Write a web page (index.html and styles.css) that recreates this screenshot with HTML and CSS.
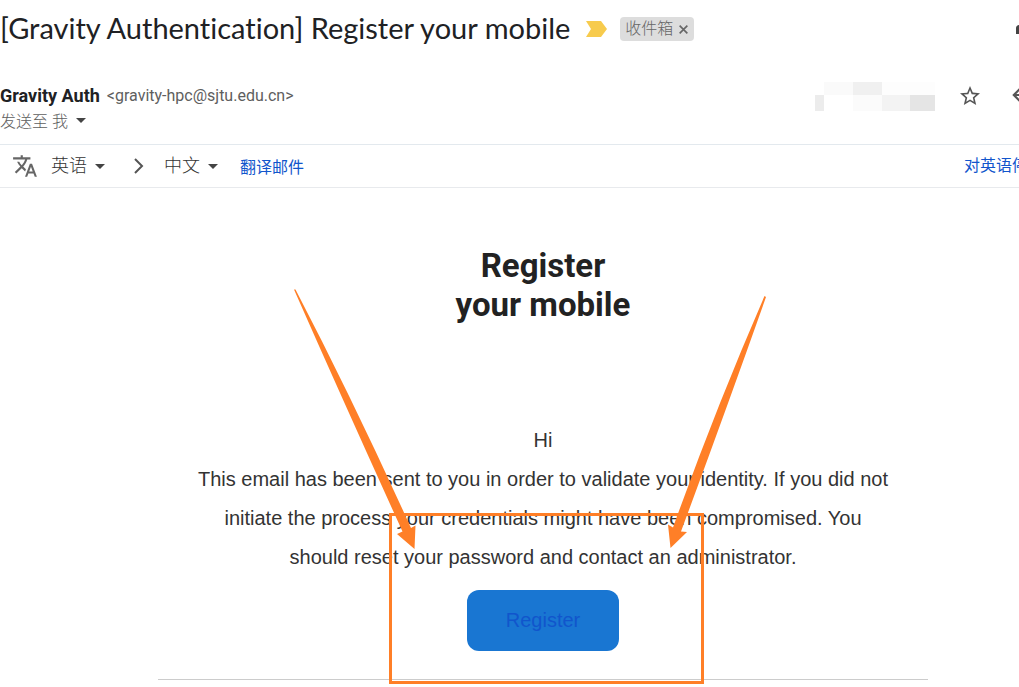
FILE: index.html
```html
<!DOCTYPE html>
<html lang="zh-CN">
<head>
<meta charset="utf-8">
<meta name="viewport" content="width=device-width, initial-scale=1">
<title>[Gravity Authentication] Register your mobile</title>
<link rel="stylesheet" href="styles.css">
</head>
<body>
<main class="mail">
  <header class="subject-bar">
    <h1 class="subject">[Gravity Authentication] Register your mobile</h1>
    <svg class="important" viewBox="0 0 22 16" aria-hidden="true"><path d="M0 0h15l6 8-6 8H0l5-8z"/></svg>
    <span class="label">收件箱
      <button class="label-remove" aria-label="移除标签"><svg viewBox="0 0 10 10"><path d="M1.5 1.5l7 7M8.5 1.5l-7 7"/></svg></button>
    </span>
    <button class="icon-button print" aria-label="打印"><svg viewBox="0 0 24 24"><path d="M19 8H5c-1.660 0-3 1.340-3 3v6h4v4h12v-4h4v-6c0-1.660-1.340-3-3-3zM16 19H8v-5h8zM18 3H6v4h12z"/></svg></button>
  </header>

  <section class="sender-bar">
    <div class="sender">
      <div class="from"><strong class="name">Gravity Auth</strong><span class="address">&lt;gravity-hpc@sjtu.edu.cn&gt;</span></div>
      <button class="recipient">发送至 我 <span class="caret"></span></button>
    </div>
    <svg class="date-mask" viewBox="0 0 120 29" shape-rendering="crispEdges" aria-hidden="true">
      <path fill="#fafafa" d="M9 0h29v13H9z"/>
      <path fill="#f0f0f0" d="M38 0h29v13H38z"/>
      <path fill="#fdfdfd" d="M67 0h53v13H67z"/>
      <path fill="#ececec" d="M0 13h9v16H0z"/>
      <path fill="#fbfbfb" d="M38 13h29v16H38z"/>
      <path fill="#f3f3f3" d="M67 13h28v16H67z"/>
      <path fill="#e5e5e5" d="M95 13h25v16H95z"/>
    </svg>
    <button class="icon-button star" aria-label="加星标"><svg viewBox="0 0 24 24"><path d="M22 9.240l-7.190-.62L12 2 9.190 8.630 2 9.240l5.460 4.730L5.820 21 12 17.270 18.180 21l-1.630-7.030zM12 15.400l-3.760 2.270 1-4.280-3.320-2.880 4.380-.38L12 6.100l1.710 4.040 4.380.38-3.320 2.880 1 4.280z"/></svg></button>
    <button class="icon-button reply" aria-label="回复"><svg viewBox="0 0 24 24"><path d="M10 5l1.400 1.400L6.800 11H21v2H6.800l4.600 4.600L10 19l-7-7z"/></svg></button>
  </section>

  <nav class="translate-bar">
    <svg class="translate-icon" viewBox="0 0 24 24" aria-hidden="true"><path d="M12.870 15.070l-2.540-2.510.03-.03c1.740-1.940 2.980-4.170 3.710-6.530H17V4h-7V2H8v2H1v1.990h11.170C11.500 7.920 10.440 9.750 9 11.350 8.070 10.320 7.300 9.190 6.690 8h-2c.73 1.630 1.730 3.170 2.980 4.560l-5.090 5.020L4 19l5-5 3.110 3.110zM18.500 10h-2L12 22h2l1.120-3h4.750L21 22h2zm-2.620 7l1.620-4.330L19.120 17z"/></svg>
    <button class="language from-language">英语 <span class="caret"></span></button>
    <svg class="chevron" viewBox="0 0 12 18" aria-hidden="true"><path d="M2 2l7 7-7 7"/></svg>
    <button class="language">中文 <span class="caret"></span></button>
    <a class="translate-link" href="#">翻译邮件</a>
    <a class="disable-link" href="#">对英语停用</a>
  </nav>

  <article class="message">
    <div class="card">
      <h2 class="heading">Register<br>your mobile</h2>
      <div class="copy">
        <p>Hi</p>
        <p>This email has been sent to you in order to validate your identity. If you did not initiate the process your credentials might have been compromised. You should reset your password and contact an administrator.</p>
      </div>
      <a class="register" href="#">Register</a>
    </div>
  </article>

  <svg class="markup" viewBox="0 0 1019 687" aria-hidden="true">
    <path class="frame" d="M390.500 514.500h312v168h-312z"/>
    <path d="M294 289.500L295.500 289.500Q353 400 411 528L415.500 525.500 414.500 549 397 534 402.500 531.500Q345 405 294 289.500z"/>
    <path d="M764.500 296L766 297Q726 410 681 531.500L687 532 670.500 548 668 524.500 673 527.500Q715 410 764.500 296z"/>
  </svg>
</main>
</body>
</html>
```
FILE: styles.css
```css
* {
  box-sizing: border-box;
}

body {
  margin: 0;
  background: #fff;
  color: #202124;
  font-family: Roboto, "Noto Sans CJK SC", sans-serif;
}

button {
  padding: 0;
  border: 0;
  background: none;
  color: inherit;
  font: inherit;
  cursor: pointer;
}

h1, h2, p {
  margin: 0;
}

a {
  color: #1155cc;
  text-decoration: none;
}

svg {
  display: block;
  flex: none;
}

.mail {
  position: relative;
  min-height: 100vh;
  overflow: hidden;
}

.subject-bar {
  display: flex;
  align-items: center;
  height: 58px;
}

.subject {
  padding-bottom: 2px;
  font-family: Lato, "Noto Sans CJK SC", sans-serif;
  font-size: 29px;
  font-weight: 400;
  font-variant-ligatures: none;
  line-height: 36px;
  white-space: nowrap;
}

.important {
  width: 22px;
  height: 16px;
  margin-left: 16px;
  fill: #f7cb4d;
}

.label {
  display: flex;
  align-items: center;
  gap: 5px;
  height: 24px;
  margin-left: 12px;
  padding: 0 5px;
  border-radius: 4px;
  background: #ddd;
  color: #666;
  font-size: 16px;
  font-weight: 300;
  line-height: 22px;
  white-space: nowrap;
}

.label-remove svg {
  width: 11px;
  height: 11px;
  fill: none;
  stroke: #666;
  stroke-width: 1.500;
}

.icon-button {
  flex: none;
}

.icon-button svg {
  width: 24px;
  height: 24px;
  fill: #555;
}

.print {
  margin: 0 -19px 0 auto;
}

.print svg {
  fill: #444;
}

.sender-bar {
  display: flex;
  align-items: flex-start;
  height: 86px;
  padding-top: 24px;
}

.sender {
  flex: 1;
}

.from {
  display: flex;
  align-items: center;
  gap: 7px;
  height: 27px;
}

.name {
  font-size: 18px;
  font-weight: 700;
}

.address {
  color: #5e5e5e;
  font-size: 16px;
}

.recipient {
  display: flex;
  align-items: center;
  gap: 8px;
  height: 22px;
  color: #5e5e5e;
  font-size: 16px;
  font-weight: 300;
}

.caret {
  border: 5px solid transparent;
  border-top-color: #444;
  border-bottom: 0;
}

.date-mask {
  width: 120px;
  height: 29px;
}

.star {
  margin: 2px 0 0 23px;
}

.reply {
  margin: 0 -16px 0 27px;
}

.reply svg {
  width: 26px;
  height: 26px;
}

.translate-bar {
  display: flex;
  align-items: center;
  height: 44px;
  padding-left: 12px;
  border-top: 1px solid #e3e9ee;
  border-bottom: 1px solid #e8eaed;
  white-space: nowrap;
}

.translate-icon {
  width: 26px;
  height: 26px;
  fill: #666;
}

.language {
  display: flex;
  align-items: center;
  gap: 8px;
  color: #333;
  font-size: 18px;
  font-weight: 300;
  line-height: 24px;
}

.from-language {
  margin-left: 13px;
}

.chevron {
  width: 12px;
  height: 18px;
  margin: 0 19px 0 28px;
  fill: none;
  stroke: #555;
  stroke-width: 2;
}

.translate-link {
  margin-left: 22px;
  font-size: 16px;
}

.disable-link {
  margin: 0 -25px 0 auto;
  padding-bottom: 4px;
  font-size: 16px;
}

.message {
  padding: 58px 0 0 67px;
}

.card {
  max-width: 770px;
  margin: 0 auto;
  padding-bottom: 28px;
  border-bottom: 1px solid #ccc;
  text-align: center;
}

.heading {
  font-size: 33px;
  font-weight: 700;
  line-height: 39px;
  color: #222;
}

.copy {
  padding: 97px 35px 0;
  color: #333;
  font-family: "Liberation Sans", Arial, sans-serif;
  font-size: 20px;
  line-height: 39px;
}

.register {
  display: inline-block;
  margin-top: 13px;
  padding: 0 39px;
  border-radius: 12px;
  background: #1976d2;
  font-family: "Liberation Sans", Arial, sans-serif;
  font-size: 20px;
  line-height: 61px;
}

.markup {
  position: absolute;
  top: 0;
  left: 0;
  width: 1019px;
  height: 687px;
  fill: #ff7f27;
  pointer-events: none;
}

.frame {
  fill: none;
  stroke: #ff7f27;
  stroke-width: 3;
}
```
